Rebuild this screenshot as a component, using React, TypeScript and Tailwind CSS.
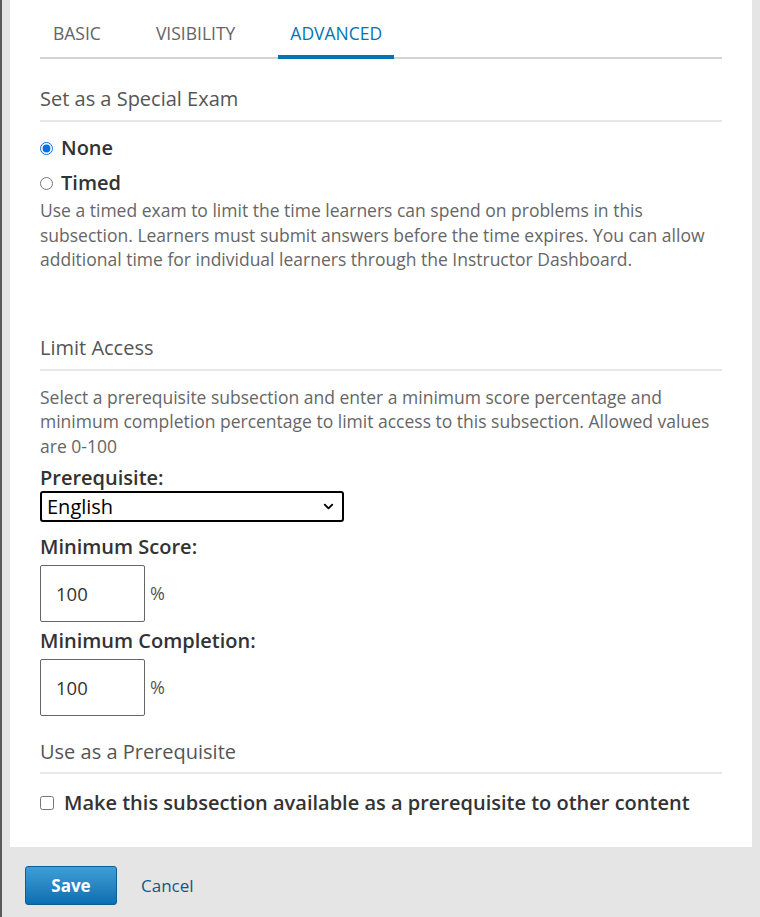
import { ChevronDown } from 'lucide-react';

const font = { fontFamily: '"Open Sans", "Noto Sans", sans-serif' };

function SectionTitle({ children, pb = 'pb-[7px]' }: { children: React.ReactNode; pb?: string }) {
  return (
    <div className={`border-b-2 border-[#e7e7e7] text-[20px] leading-[28px] text-[#555] ${pb}`}>
      {children}
    </div>
  );
}

function PercentField({ label, value, top }: { label: string; value: string; top: string }) {
  return (
    <div className={top}>
      <div className="text-[20px] font-semibold leading-[26px] text-[#333]">{label}</div>
      <div className="mt-[5px] flex items-center gap-[5px]">
        <div className="flex h-[57px] w-[105px] items-center rounded-[2px] border border-[#666] pl-[15px] text-[18.5px] text-[#333]">
          {value}
        </div>
        <span className="text-[18px] text-[#555]">%</span>
      </div>
    </div>
  );
}

export default function App() {
  return (
    <div className="flex min-h-[917px] w-[760px] bg-[#e5e5e5]" style={font}>
      <div className="w-[2px] bg-[#5a5a5a]" />
      <div className="flex flex-1 flex-col pl-[8px] pr-[8px]">
        <div className="bg-white px-[30px] pb-[30px]">
          {/* tabs */}
          <div className="flex border-b-2 border-[#d3d3d3] pl-[13px] text-[17.5px] leading-[20px]">
            <div className="pb-[14px] pt-[23px] text-[#646464]">BASIC</div>
            <div className="ml-[55px] pb-[14px] pt-[23px] text-[#646464]">VISIBILITY</div>
            <div className="-mb-[2px] ml-[43px] border-b-[4px] border-[#0075b4] px-[12px] pb-[12px] pt-[23px] text-[#0075b4]">
              ADVANCED
            </div>
          </div>

          <div className="mt-[26px]">
            <SectionTitle>Set as a Special Exam</SectionTitle>
          </div>

          <label className="mt-[13px] flex items-center gap-[8px] text-[20px] font-semibold leading-[26px] text-[#333]">
            <input type="radio" name="exam" defaultChecked className="m-0 h-[13px] w-[13px] accent-[#0a6fde]" />
            None
          </label>
          <label className="mt-[9px] flex items-center gap-[8px] text-[20px] font-semibold leading-[26px] text-[#333]">
            <input type="radio" name="exam" className="m-0 h-[13px] w-[13px]" />
            Timed
          </label>
          <p className="mt-[2px] text-[17.5px] leading-[24.5px] text-[#666]">
            Use a timed exam to limit the time learners can spend on problems in this subsection. Learners must submit answers before the time expires. You can allow additional time for individual learners through the Instructor Dashboard.
          </p>

          <div className="mt-[62px]">
            <SectionTitle>Limit Access</SectionTitle>
          </div>
          <p className="mt-[14px] text-[17.5px] leading-[24.5px] text-[#666]">
            Select a prerequisite subsection and enter a minimum score percentage and minimum completion percentage to limit access to this subsection. Allowed values are 0-100
          </p>

          <div className="mt-[7px] text-[20px] font-semibold leading-[26px] text-[#333]">Prerequisite:</div>
          <div className="flex h-[31px] w-[304px] items-center justify-between rounded-[3px] border-2 border-black pl-[5px] pr-[6px] text-[20px] text-black">
            English
            <ChevronDown size={15} strokeWidth={3} />
          </div>

          <PercentField label="Minimum Score:" value="100" top="mt-[12px]" />
          <PercentField label="Minimum Completion:" value="100" top="mt-[6px]" />

          <div className="mt-[22px]">
            <SectionTitle pb="pb-[6px]">Use as a Prerequisite</SectionTitle>
          </div>
          <label className="mt-[15px] flex items-center gap-[10px] text-[20px] font-semibold leading-[28px] text-[#333]">
            <input type="checkbox" className="m-0 h-[14px] w-[14px]" />
            Make this subsection available as a prerequisite to other content
          </label>
        </div>

        {/* footer */}
        <div className="flex items-center pl-[15px] pt-[19px]">
          <button className="h-[39px] w-[92px] rounded-[3px] border border-[#0a5f93] bg-gradient-to-b from-[#3f9ed6] to-[#0b6eb1] text-[17px] font-bold text-white">
            Save
          </button>
          <span className="ml-[24px] text-[17px] text-[#0a5a86]">Cancel</span>
        </div>
      </div>
    </div>
  );
}
